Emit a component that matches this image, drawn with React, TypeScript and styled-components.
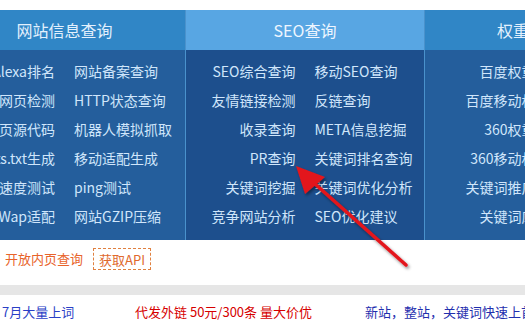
import React from "react";
import styled, { createGlobalStyle } from "styled-components";

const GlobalStyle = createGlobalStyle`
  html, body {
    margin: 0;
    padding: 0;
    background: #ffffff;
  }
  body {
    font-family: "Noto Sans CJK SC", "Noto Sans", sans-serif;
  }
`;

type Column = {
  title: string;
  width: number;
  active?: boolean;
  left: string[];
  right: string[];
};

const columns: Column[] = [
  {
    title: "网站信息查询",
    width: 241,
    left: ["Alexa排名", "网页检测", "网页源代码", "robots.txt生成", "网站速度测试", "Wap适配"],
    right: ["网站备案查询", "HTTP状态查询", "机器人模拟抓取", "移动适配生成", "ping测试", "网站GZIP压缩"],
  },
  {
    title: "SEO查询",
    width: 238,
    active: true,
    left: ["SEO综合查询", "友情链接检测", "收录查询", "PR查询", "关键词挖掘", "竞争网站分析"],
    right: ["移动SEO查询", "反链查询", "META信息挖掘", "关键词排名查询", "关键词优化分析", "SEO优化建议"],
  },
  {
    title: "权重综合查询",
    width: 240,
    left: ["百度权重", "百度移动权", "360权重", "360移动权", "关键词推广", "关键词库"],
    right: ["权重历史", "移动权重", "360收录", "360排名", "推广指数", "长尾词库"],
  },
];

function App() {
  return (
    <>
      <GlobalStyle />
      <Page>
        <TopGap />
        <Nav>
          {columns.map((col, i) => (
            <NavColumn key={col.title} $width={col.width} $first={i === 0}>
              <Tab $active={col.active}>{col.title}</Tab>
              <Panel $active={col.active}>
                {col.left.map((item, r) => (
                  <React.Fragment key={item}>
                    <ToolLink $align="right">{item}</ToolLink>
                    <ToolLink $align="left">{col.right[r]}</ToolLink>
                  </React.Fragment>
                ))}
              </Panel>
            </NavColumn>
          ))}
        </Nav>
        <ApiRow>
          <OpenText>开放内页查询</OpenText>
          <ApiButton>获取API</ApiButton>
        </ApiRow>
        <Divider />
        <AdRow>
          <Ad $color="#2a3fc6" $width={133}>7月大量上词</Ad>
          <Ad $color="#d60000" $width={230}>代发外链 50元/300条 量大价优</Ad>
          <Ad $color="#1f2fae">新站，整站，关键词快速上首页</Ad>
        </AdRow>
        <Arrow viewBox="0 0 525 322" width="525" height="322">
          <defs>
            <filter id="shadow" x="-20%" y="-20%" width="140%" height="140%">
              <feDropShadow dx="1.5" dy="2" stdDeviation="1.5" floodColor="#000" floodOpacity="0.45" />
            </filter>
          </defs>
          <g filter="url(#shadow)">
            <line x1="406" y1="265" x2="314" y2="183" stroke="#e3151b" strokeWidth="3.5" strokeLinecap="round" />
            <polygon points="296,166 325,177 305,194" fill="#e3151b" />
          </g>
        </Arrow>
      </Page>
    </>
  );
}

const Page = styled.div`
  position: relative;
  width: 525px;
  height: 322px;
  overflow: hidden;
`;

const TopGap = styled.div`
  height: 10px;
`;

const Nav = styled.div`
  display: flex;
  margin-left: -56px;
`;

const NavColumn = styled.div<{ $width: number; $first?: boolean }>`
  flex: 0 0 ${(p) => p.$width}px;
  display: flex;
  flex-direction: column;
  border-left: ${(p) => (p.$first ? "none" : "1px solid #4a92cc")};
`;

const Tab = styled.div<{ $active?: boolean }>`
  height: 40px;
  display: flex;
  align-items: center;
  justify-content: center;
  font-size: 16px;
  color: ${(p) => (p.$active ? "#eef6ff" : "#e2f0fd")};
  background: ${(p) => (p.$active ? "#58a6e3" : "#3086c6")};
`;

const Panel = styled.div<{ $active?: boolean }>`
  display: grid;
  grid-template-columns: 1fr 1fr;
  column-gap: 19px;
  padding: 7px 0 9px;
  background: ${(p) => (p.$active ? "#1d4f8d" : "#245e9c")};
`;

const ToolLink = styled.a<{ $align: "left" | "right" }>`
  display: block;
  font-size: 14px;
  line-height: 29px;
  color: #d0e6fb;
  white-space: nowrap;
  text-align: ${(p) => p.$align};
  direction: ${(p) => (p.$align === "right" ? "rtl" : "ltr")};
  unicode-bidi: plaintext;
  cursor: pointer;
`;

const ApiRow = styled.div`
  box-sizing: border-box;
  display: flex;
  align-items: flex-start;
  gap: 10px;
  height: 45px;
  padding: 8px 0 0 5px;
`;

const OpenText = styled.span`
  font-size: 13px;
  line-height: 22px;
  color: #e8632a;
`;

const ApiButton = styled.span`
  box-sizing: border-box;
  display: inline-flex;
  align-items: center;
  height: 22px;
  padding: 0 5px;
  font-size: 13px;
  color: #e0692e;
  border: 1px dashed #e0803f;
`;

const Divider = styled.div`
  height: 10px;
  background: #e6e6e6;
`;

const AdRow = styled.div`
  display: flex;
  align-items: center;
  height: 32px;
  padding-left: 2px;
  white-space: nowrap;
`;

const Ad = styled.span<{ $color: string; $width?: number }>`
  flex: 0 0 ${(p) => (p.$width ? `${p.$width}px` : "auto")};
  font-size: 13px;
  color: ${(p) => p.$color};
`;

const Arrow = styled.svg`
  position: absolute;
  left: 0;
  top: 0;
  pointer-events: none;
`;

export default App;
